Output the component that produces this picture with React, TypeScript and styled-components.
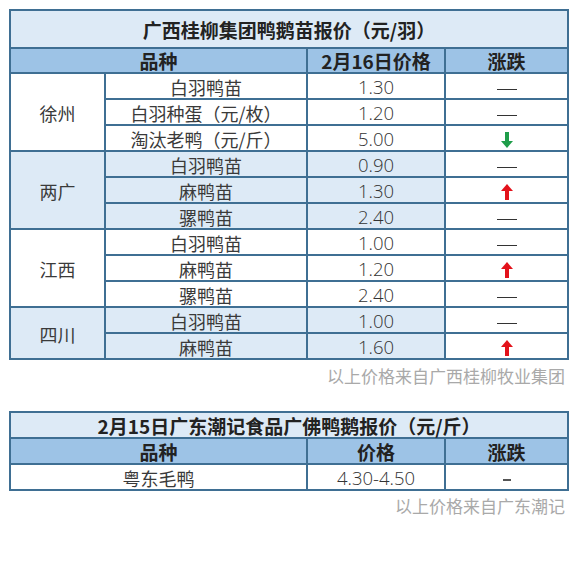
import React from "react";
import styled, { createGlobalStyle } from "styled-components";

const Global = createGlobalStyle`
  html, body { margin: 0; padding: 0; background: #ffffff; }
  body { font-family: "Noto Sans CJK SC", "Noto Sans", sans-serif; }
`;

const BORDER = "#3f6f93";
const LIGHT = "#ddeaf6";
const HEAD = "#9dc3e6";

const Page = styled.div`
  width: 577px;
  height: 571px;
  padding: 9px 0 0 9px;
  box-sizing: border-box;
  display: flex;
  flex-direction: column;
`;

const Table = styled.table`
  border-collapse: collapse;
  table-layout: fixed;
  width: 558px;
  font-size: 18px;
  color: #3a3a3a;
`;

const TitleCell = styled.td<{ $h: number }>`
  border: 2px solid ${BORDER};
  background: ${LIGHT};
  height: ${(p) => p.$h}px;
  padding: 0;
  text-align: center;
  font-weight: bold;
  font-size: 19px;
  color: #222;
  line-height: 1;
`;

const HeadCell = styled.td<{ $h: number }>`
  border: 2px solid ${BORDER};
  background: ${HEAD};
  height: ${(p) => p.$h}px;
  padding: 0;
  text-align: center;
  font-weight: bold;
  font-size: 19px;
  color: #222;
  line-height: 1;
`;

const Cell = styled.td<{ $bg?: string }>`
  border: 2px solid ${BORDER};
  background: ${(p) => p.$bg || "#ffffff"};
  height: 24px;
  padding: 0;
  text-align: center;
  vertical-align: middle;
  line-height: 1;
  font-size: 18px;
  color: #3a3a3a;
`;

const Num = styled.span`
  font-family: "Open Sans", "Noto Sans CJK SC", sans-serif;
  font-weight: 300;
  font-size: 18.5px;
  color: #333;
  position: relative;
  top: 1px;
`;

const Label = styled.span`
  position: relative;
  top: 1px;
`;

const Flat = styled.span`
  display: inline-block;
  width: 20px;
  height: 1px;
  background: #333;
  vertical-align: middle;
`;

const Dash = styled.span`
  display: inline-block;
  width: 8px;
  height: 2px;
  background: #555;
  vertical-align: middle;
`;

const Note = styled.div<{ $mt: number }>`
  width: 558px;
  text-align: right;
  font-size: 17px;
  color: #a9a9a9;
  margin-top: ${(p) => p.$mt}px;
  line-height: 1;
  padding-right: 2px;
  box-sizing: border-box;
`;

const Gap = styled.div`
  height: 27px;
`;

const Arrow: React.FC<{ dir: "up" | "down" }> = ({ dir }) => (
  <svg
    width="12"
    height="16"
    viewBox="0 0 12 16"
    style={{ verticalAlign: "middle" }}
  >
    {dir === "up" ? (
      <g fill="#e3121b">
        <polygon points="0,7 6,0 12,7" />
        <rect x="4" y="6" width="4" height="10" />
      </g>
    ) : (
      <g fill="#1f9d4a">
        <polygon points="0,9 6,16 12,9" />
        <rect x="4" y="0" width="4" height="10" />
      </g>
    )}
  </svg>
);

type Trend = "flat" | "up" | "down";
type Item = [string, string, Trend];
type Group = { region: string; light: boolean; items: Item[] };

const groups: Group[] = [
  {
    region: "徐州",
    light: false,
    items: [
      ["白羽鸭苗", "1.30", "flat"],
      ["白羽种蛋（元/枚）", "1.20", "flat"],
      ["淘汰老鸭（元/斤）", "5.00", "down"],
    ],
  },
  {
    region: "两广",
    light: true,
    items: [
      ["白羽鸭苗", "0.90", "flat"],
      ["麻鸭苗", "1.30", "up"],
      ["骡鸭苗", "2.40", "flat"],
    ],
  },
  {
    region: "江西",
    light: false,
    items: [
      ["白羽鸭苗", "1.00", "flat"],
      ["麻鸭苗", "1.20", "up"],
      ["骡鸭苗", "2.40", "flat"],
    ],
  },
  {
    region: "四川",
    light: true,
    items: [
      ["白羽鸭苗", "1.00", "flat"],
      ["麻鸭苗", "1.60", "up"],
    ],
  },
];

const TrendMark: React.FC<{ t: Trend }> = ({ t }) =>
  t === "flat" ? <Flat /> : <Arrow dir={t} />;

export default function App() {
  return (
    <>
      <Global />
      <Page>
        <Table>
          <colgroup>
            <col style={{ width: 95 }} />
            <col style={{ width: 202 }} />
            <col style={{ width: 138 }} />
            <col style={{ width: 123 }} />
          </colgroup>
          <tbody>
            <tr>
              <TitleCell $h={36} colSpan={4}>
                广西桂柳集团鸭鹅苗报价（元/羽）
              </TitleCell>
            </tr>
            <tr>
              <HeadCell $h={23} colSpan={2}>
                品种
              </HeadCell>
              <HeadCell $h={23}>2月16日价格</HeadCell>
              <HeadCell $h={23}>涨跌</HeadCell>
            </tr>
            {groups.map((g) =>
              g.items.map((it, i) => {
                const bg = g.light ? LIGHT : "#ffffff";
                return (
                  <tr key={g.region + i}>
                    {i === 0 && (
                      <Cell $bg={bg} rowSpan={g.items.length}>
                        <Label>{g.region}</Label>
                      </Cell>
                    )}
                    <Cell $bg={bg}>
                      <Label>{it[0]}</Label>
                    </Cell>
                    <Cell $bg={bg}>
                      <Num>{it[1]}</Num>
                    </Cell>
                    <Cell>
                      <TrendMark t={it[2]} />
                    </Cell>
                  </tr>
                );
              })
            )}
          </tbody>
        </Table>
        <Note $mt={7}>以上价格来自广西桂柳牧业集团</Note>
        <Gap />
        <Table>
          <colgroup>
            <col style={{ width: 297 }} />
            <col style={{ width: 138 }} />
            <col style={{ width: 123 }} />
          </colgroup>
          <tbody>
            <tr>
              <TitleCell $h={24} colSpan={3}>
                2月15日广东潮记食品广佛鸭鹅报价（元/斤）
              </TitleCell>
            </tr>
            <tr>
              <HeadCell $h={24}>品种</HeadCell>
              <HeadCell $h={24}>价格</HeadCell>
              <HeadCell $h={24}>涨跌</HeadCell>
            </tr>
            <tr>
              <Cell>
                <Label>粤东毛鸭</Label>
              </Cell>
              <Cell>
                <Num>4.30-4.50</Num>
              </Cell>
              <Cell>
                <Dash />
              </Cell>
            </tr>
          </tbody>
        </Table>
        <Note $mt={6}>以上价格来自广东潮记</Note>
      </Page>
    </>
  );
}
